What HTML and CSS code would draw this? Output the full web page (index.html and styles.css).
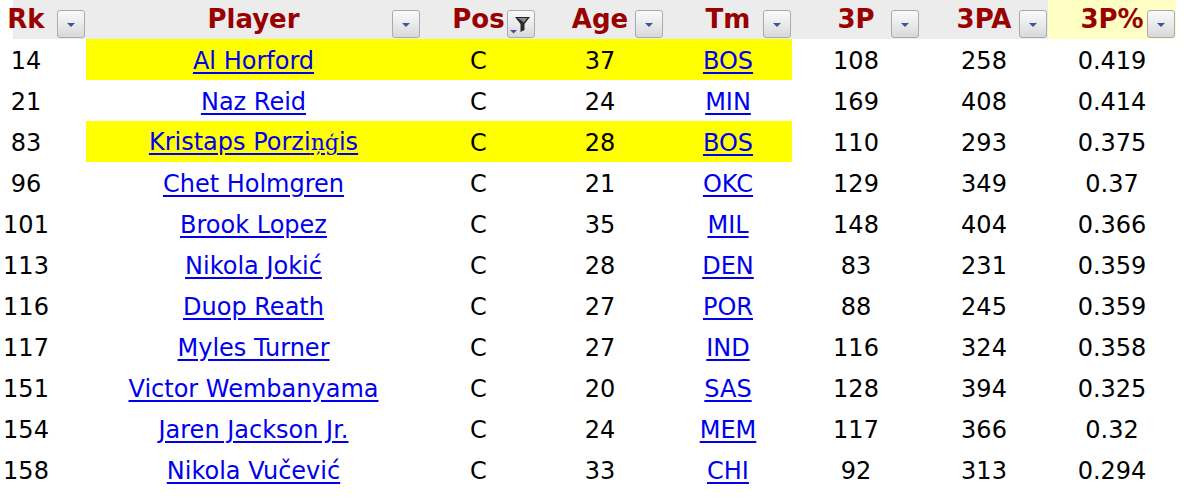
FILE: index.html
```html
<!DOCTYPE html>
<html>
<head>
<meta charset="utf-8">
<link rel="stylesheet" href="styles.css">
</head>
<body>
<table class="stats">
  <colgroup>
    <col class="c-rk"><col class="c-player"><col class="c-pos"><col class="c-num"><col class="c-num"><col class="c-num"><col class="c-num"><col class="c-num">
  </colgroup>
  <thead>
    <tr>
      <th class="h-rk">Rk<span class="dd"><svg viewBox="0 0 28 28" width="28" height="28"><path d="M10 13h8l-4 4z" fill="#3d52a0"/></svg></span></th>
      <th>Player<span class="dd"><svg viewBox="0 0 28 28" width="28" height="28"><path d="M10 13h8l-4 4z" fill="#3d52a0"/></svg></span></th>
      <th>Pos<span class="dd"><svg viewBox="0 0 28 28" width="28" height="28"><path d="M8 7h15l-5.5 7v6l-4 2v-8z" fill="#2a2a2a"/><path d="M10.5 8h10l-4 5v-1z" fill="#8a8a8a"/><path d="M3 20h7l-3.5 3.5z" fill="#3d52a0"/></svg></span></th>
      <th>Age<span class="dd"><svg viewBox="0 0 28 28" width="28" height="28"><path d="M10 13h8l-4 4z" fill="#3d52a0"/></svg></span></th>
      <th>Tm<span class="dd"><svg viewBox="0 0 28 28" width="28" height="28"><path d="M10 13h8l-4 4z" fill="#3d52a0"/></svg></span></th>
      <th>3P<span class="dd"><svg viewBox="0 0 28 28" width="28" height="28"><path d="M10 13h8l-4 4z" fill="#3d52a0"/></svg></span></th>
      <th>3PA<span class="dd"><svg viewBox="0 0 28 28" width="28" height="28"><path d="M10 13h8l-4 4z" fill="#3d52a0"/></svg></span></th>
      <th class="h-sort">3P%<span class="dd"><svg viewBox="0 0 28 28" width="28" height="28"><path d="M10 13h8l-4 4z" fill="#3d52a0"/></svg></span></th>
    </tr>
  </thead>
  <tbody>
    <tr class="hl"><td class="rk">14</td><td class="y"><a href="#">Al Horford</a></td><td class="y">C</td><td class="y">37</td><td class="y"><a href="#">BOS</a></td><td>108</td><td>258</td><td>0.419</td></tr>
    <tr><td class="rk">21</td><td><a href="#">Naz Reid</a></td><td>C</td><td>24</td><td><a href="#">MIN</a></td><td>169</td><td>408</td><td>0.414</td></tr>
    <tr class="hl"><td class="rk">83</td><td class="y"><a href="#">Kristaps Porzi<span class="fb">ņģ</span>is</a></td><td class="y">C</td><td class="y">28</td><td class="y"><a href="#">BOS</a></td><td>110</td><td>293</td><td>0.375</td></tr>
    <tr><td class="rk">96</td><td><a href="#">Chet Holmgren</a></td><td>C</td><td>21</td><td><a href="#">OKC</a></td><td>129</td><td>349</td><td>0.37</td></tr>
    <tr><td class="rk">101</td><td><a href="#">Brook Lopez</a></td><td>C</td><td>35</td><td><a href="#">MIL</a></td><td>148</td><td>404</td><td>0.366</td></tr>
    <tr><td class="rk">113</td><td><a href="#">Nikola Jokić</a></td><td>C</td><td>28</td><td><a href="#">DEN</a></td><td>83</td><td>231</td><td>0.359</td></tr>
    <tr><td class="rk">116</td><td><a href="#">Duop Reath</a></td><td>C</td><td>27</td><td><a href="#">POR</a></td><td>88</td><td>245</td><td>0.359</td></tr>
    <tr><td class="rk">117</td><td><a href="#">Myles Turner</a></td><td>C</td><td>27</td><td><a href="#">IND</a></td><td>116</td><td>324</td><td>0.358</td></tr>
    <tr><td class="rk">151</td><td><a href="#">Victor Wembanyama</a></td><td>C</td><td>20</td><td><a href="#">SAS</a></td><td>128</td><td>394</td><td>0.325</td></tr>
    <tr><td class="rk">154</td><td><a href="#">Jaren Jackson Jr.</a></td><td>C</td><td>24</td><td><a href="#">MEM</a></td><td>117</td><td>366</td><td>0.32</td></tr>
    <tr><td class="rk">158</td><td><a href="#">Nikola Vučević</a></td><td>C</td><td>33</td><td><a href="#">CHI</a></td><td>92</td><td>313</td><td>0.294</td></tr>
  </tbody>
</table>
</body>
</html>
```
FILE: styles.css
```css
html, body {
  margin: 0;
  padding: 0;
  background: #ffffff;
}

.stats {
  border-collapse: collapse;
  table-layout: fixed;
  width: 1176px;
  font-family: "DejaVu Sans", Verdana, sans-serif;
  font-size: 24px;
  color: #000;
}

.c-rk { width: 86px; }
.c-player { width: 335px; }
.c-pos { width: 115px; }
.c-num { width: 128px; }

.stats th {
  position: relative;
  height: 39px;
  padding: 0;
  background: #ececec;
  color: #990000;
  font-weight: bold;
  font-size: 26px;
  line-height: 39px;
  text-align: center;
  white-space: nowrap;
}

.stats th.h-rk {
  background: linear-gradient(to right, #ffffff 13px, #ececec 13px);
  padding-right: 34px;
}

.stats th.h-sort {
  background: #ffffc4;
}

.dd {
  position: absolute;
  right: 1px;
  bottom: 1px;
  width: 26px;
  height: 26px;
  border: 1px solid #a3acbf;
  border-radius: 3px;
  background: linear-gradient(#fafafa, #e9e9e9 55%, #d8d8d8);
  overflow: hidden;
}

.dd svg {
  display: block;
  margin: -1px 0 0 -1px;
}

.stats td {
  height: 39px;
  padding: 2px 0 0;
  text-align: center;
  vertical-align: middle;
  line-height: 28px;
  white-space: nowrap;
}

.stats td.rk {
  padding-right: 34px;
}

.stats td.y {
  background: #ffff00;
}

.stats a {
  color: #0000ee;
  text-decoration: underline;
  text-underline-offset: 3px;
}

.fb {
  font-family: "DejaVu Serif", serif;
  font-size: 22px;
}
```
